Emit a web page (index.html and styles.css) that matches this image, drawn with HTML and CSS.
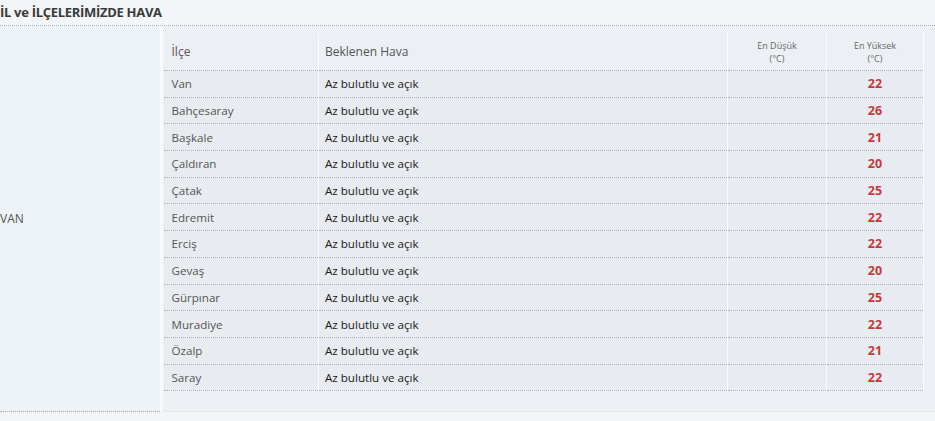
FILE: index.html
```html
<!DOCTYPE html>
<html lang="tr">
<head>
<meta charset="utf-8">
<link rel="stylesheet" href="styles.css">
</head>
<body>
<div class="panel">
  <h2 class="title">İL ve İLÇELERİMİZDE HAVA</h2>
  <table class="outer">
    <tr>
      <td class="il">VAN</td>
      <td class="wrap">
        <table class="inner">
          <colgroup>
            <col class="w1"><col class="w2"><col class="w3"><col class="w4">
          </colgroup>
          <thead>
            <tr>
              <th class="c1">İlçe</th>
              <th class="c2">Beklenen Hava</th>
              <th class="c3 small">En Düşük<br>(°C)</th>
              <th class="c4 small">En Yüksek<br>(°C)</th>
            </tr>
          </thead>
          <tbody>
            <tr><td class="c1">Van</td><td class="c2">Az bulutlu ve açık</td><td class="c3"></td><td class="c4">22</td></tr>
            <tr><td class="c1">Bahçesaray</td><td class="c2">Az bulutlu ve açık</td><td class="c3"></td><td class="c4">26</td></tr>
            <tr><td class="c1">Başkale</td><td class="c2">Az bulutlu ve açık</td><td class="c3"></td><td class="c4">21</td></tr>
            <tr><td class="c1">Çaldıran</td><td class="c2">Az bulutlu ve açık</td><td class="c3"></td><td class="c4">20</td></tr>
            <tr><td class="c1">Çatak</td><td class="c2">Az bulutlu ve açık</td><td class="c3"></td><td class="c4">25</td></tr>
            <tr><td class="c1">Edremit</td><td class="c2">Az bulutlu ve açık</td><td class="c3"></td><td class="c4">22</td></tr>
            <tr><td class="c1">Erciş</td><td class="c2">Az bulutlu ve açık</td><td class="c3"></td><td class="c4">22</td></tr>
            <tr><td class="c1">Gevaş</td><td class="c2">Az bulutlu ve açık</td><td class="c3"></td><td class="c4">20</td></tr>
            <tr><td class="c1">Gürpınar</td><td class="c2">Az bulutlu ve açık</td><td class="c3"></td><td class="c4">25</td></tr>
            <tr><td class="c1">Muradiye</td><td class="c2">Az bulutlu ve açık</td><td class="c3"></td><td class="c4">22</td></tr>
            <tr><td class="c1">Özalp</td><td class="c2">Az bulutlu ve açık</td><td class="c3"></td><td class="c4">21</td></tr>
            <tr><td class="c1">Saray</td><td class="c2">Az bulutlu ve açık</td><td class="c3"></td><td class="c4">22</td></tr>
          </tbody>
        </table>
      </td>
    </tr>
  </table>
</div>
</body>
</html>
```

FILE: styles.css
```css
html, body {
  margin: 0;
  padding: 0;
  background: #f3f6f8;
}
body {
  font-family: "Open Sans", "Noto Sans", sans-serif;
  color: #555;
}
.panel {
  width: 935px;
}
.title {
  margin: 0;
  height: 26px;
  line-height: 24px;
  font-size: 13px;
  font-weight: 700;
  color: #3a3a3a;
  letter-spacing: -0.3px;
  border-bottom: 1px dotted #a9b0b6;
  box-sizing: border-box;
}
.outer {
  border-collapse: collapse;
  border-spacing: 0;
  width: 935px;
}
.outer > tbody > tr > td {
  padding: 0;
}
.outer > tbody > tr > td.il {
  width: 161px;
  background: #edf2f6;
  border-right: 3px solid #f8fafc;
  border-bottom: 1px dotted #a9b0b6;
  vertical-align: middle;
  font-size: 12px;
  color: #555;
  box-sizing: border-box;
}
.outer > tbody > tr > td.wrap {
  vertical-align: top;
  background: #edf1f5;
  padding: 7px 0 20px 1px;
  border-bottom: 1px solid #e3e8ec;
}
.inner {
  table-layout: fixed;
  border-collapse: collapse;
  border-spacing: 0;
  width: 760px;
}
.w1 { width: 155px; }
.w2 { width: 409px; }
.w3 { width: 99px; }
.w4 { width: 97px; }
.inner th, .inner td {
  padding: 0 0 0 8px;
  border-right: 1px solid #fbfcfd;
  border-bottom: 1px dotted #a9b0b6;
  text-align: left;
  font-weight: 400;
  white-space: nowrap;
  overflow: hidden;
}
.inner .c2 {
  padding-left: 6px;
}
.inner th {
  height: 37px;
  font-size: 12px;
  color: #555;
  background: #ecf0f4;
}
.inner th.small {
  font-size: 9px;
  line-height: 13px;
  color: #666;
  text-align: center;
  padding: 0;
}
.inner td {
  height: 25.7px;
  font-size: 11.6px;
  background: #e8ecf0;
}
.inner td.c1 {
  color: #555;
}
.inner td.c2 {
  color: #1a1a1a;
}
.inner td.c4 {
  text-align: center;
  padding: 0;
  color: #c7383d;
  font-weight: 700;
  font-size: 12.5px;
}
```
